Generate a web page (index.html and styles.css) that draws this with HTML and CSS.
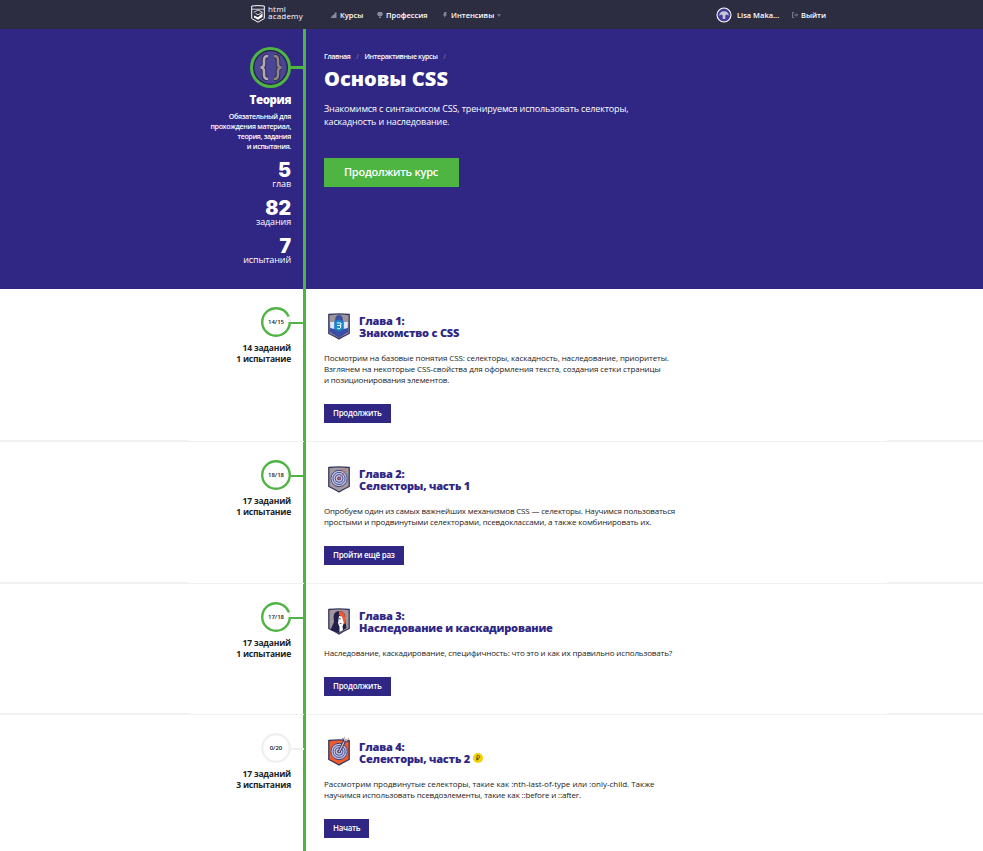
FILE: index.html
```html
<!DOCTYPE html>
<html lang="ru">
<head>
<meta charset="utf-8">
<title>Основы CSS</title>
<link rel="stylesheet" href="styles.css">
</head>
<body>
<svg width="0" height="0" class="defs" aria-hidden="true">
  <symbol id="shield" viewBox="0 0 22 27"><path d="M.8 1.5Q11 .3 21.2 1.5V20.5Q16 23 11 26Q6 23 .8 20.5Z" fill="currentColor" stroke="#34355f" stroke-width="1.3"/></symbol>
  <symbol id="target" viewBox="0 0 18 18"><circle cx="9" cy="9" r="8.4" fill="#c3c6e0" stroke="#3c4080" stroke-width="1"/><circle cx="9" cy="9" r="6.2" fill="none" stroke="#444a93" stroke-width="1"/><circle cx="9" cy="9" r="4" fill="none" stroke="#444a93" stroke-width="1"/><circle cx="9" cy="9" r="1.9" fill="#4a4478"/><circle cx="9" cy="9" r="1" fill="#e95030"/></symbol>
</svg>
<header class="top">
  <a class="logo">
    <svg class="logo-mark" viewBox="0 0 14 18" fill="none" stroke="#fff"><path d="M.7 1Q7 .2 13.3 1V13.5L7 17.2L.7 13.5Z" stroke-width="1"/><path d="M1 4.2H13M2.6 7.3L7 5L11.4 7.3L7 9.8L4.5 8.4" stroke-width=".8"/><path d="M3 10.5L7 12.2L11.5 8V12L7 14.8L3 12.6Z" fill="#fff" stroke="none"/></svg>
    <span class="logo-name">html<br>academy</span>
  </a>
  <nav class="menu">
    <a><svg class="ico" viewBox="0 0 6 6"><path d="M0 6V4.5H1.5V3H3V1.5H4V.5H5.5V6Z"/></svg><span>Курсы</span></a>
    <a class="prof"><svg class="ico" viewBox="0 0 6 6"><path d="M1.2 0H4.8L6 2L4.8 4H1.2L0 2ZM2 4.5H4V6H2Z"/></svg><span>Профессия</span></a>
    <a class="intens"><svg class="ico" viewBox="0 0 6 6"><path d="M2.5 0H4.7L3.7 2.3H5L2 6L2.6 3.4H1Z"/></svg><span>Интенсивы</span><i class="caret"></i></a>
  </nav>
  <div class="user">
    <svg class="avatar" viewBox="0 0 16 16"><circle cx="8" cy="8" r="7" fill="#433c96" stroke="#fff" stroke-width="1.1"/><path d="M3.2 8.8Q3.5 4.5 8 4.3Q12.5 4.5 12.8 8.8L10.8 7.4L9.3 8.4V12H6.7V8.4L5.2 7.4Z" fill="#c9c3d6"/></svg>
    <span class="name">Lisa Maka...</span>
    <svg class="exit" viewBox="0 0 6 6" fill="none" stroke="#8b8b98" stroke-width=".8"><path d="M2.3 .5H.5V5.5H2.3M2 3H5.5M4.2 1.6L5.6 3L4.2 4.4"/></svg>
    <span>Выйти</span>
  </div>
</header>
<main>
  <section class="row hero">
    <aside class="side">
      <div class="node"><svg class="badge" viewBox="0 0 41 41"><circle cx="20.5" cy="20.5" r="19" fill="#211f49" stroke="#4eb543" stroke-width="3"/><circle cx="20.5" cy="20.5" r="16.2" fill="#4b4596"/><g fill="none" stroke="#2c2751" stroke-width="4.4"><path d="M18 9Q14 9 14 13V17Q14 20.5 10.5 20.5Q14 20.5 14 24V28Q14 32 18 32M24 9Q28 9 28 13V17Q28 20.5 31.5 20.5Q28 20.5 28 24V28Q28 32 24 32"/></g><g fill="none" stroke-width="2.6"><path stroke="#b3aaaa" d="M18 9Q14 9 14 13V17Q14 20.5 10.5 20.5Q14 20.5 14 24V28Q14 32 18 32"/><path stroke="#8f8684" d="M24 9Q28 9 28 13V17Q28 20.5 31.5 20.5Q28 20.5 28 24V28Q28 32 24 32"/></g></svg><i class="link"></i></div>
      <h2>Теория</h2>
      <p class="note">Обязательный для<br>прохождения материал,<br>теория, задания<br>и испытания.</p>
      <dl><dt>5</dt><dd>глав</dd><dt>82</dt><dd>задания</dd><dt>7</dt><dd>испытаний</dd></dl>
    </aside>
    <i class="bar"></i>
    <div class="body">
      <div class="crumbs"><a>Главная</a><i>/</i><a>Интерактивные курсы</a><i>/</i></div>
      <h1>Основы CSS</h1>
      <p class="lead">Знакомимся с синтаксисом CSS, тренируемся использовать селекторы,<br>каскадность и наследование.</p>
      <a class="go">Продолжить курс</a>
    </div>
  </section>

  <section class="row chapter">
    <aside class="side">
      <div class="node"><svg class="ring" viewBox="0 0 30 30"><circle cx="15" cy="15" r="13.8" stroke="#f0f0f0"/><circle cx="15" cy="15" r="13.8" class="done" pathLength="15" stroke-dasharray="14 1"/></svg><b class="score">14/15</b><i class="link"></i></div>
      <p class="tasks">14 заданий<br>1 испытание</p>
    </aside>
    <i class="bar"></i>
    <div class="body">
      <div class="title"><svg class="shield" viewBox="0 0 22 27" color="#9e959b"><use href="#shield" width="22" height="27"/><path d="M7 8Q7 2 11 2Q15 2 15 8L20.3 13V19L11 25L1.7 19V13Z" fill="#3b4ea4"/><path d="M2.2 9H6.5V16L2.2 15ZM15.5 9H19.8V15L15.5 16Z" fill="#dfe8fa"/><path d="M6.5 8.5L11 6.5L15.5 8.5V16.5L11 18.5L6.5 16.5Z" fill="#1586cd"/><path d="M8.8 10H13L12.5 15L10.8 15.8L9 15M9 12.5H12.8" fill="none" stroke="#fff" stroke-width="1"/></svg><h3>Глава 1:<br>Знакомство с CSS</h3></div>
      <p class="text tight"><span class="loose">Посмотрим на базовые понятия CSS: селекторы, каскадность, наследование, приоритеты.<br>Взглянем на некоторые CSS-свойства для оформления текста, создания сетки страницы</span><br>и позиционирования элементов.</p>
      <a class="btn">Продолжить</a>
    </div>
  </section>

  <section class="row chapter">
    <aside class="side">
      <div class="node"><svg class="ring" viewBox="0 0 30 30"><circle cx="15" cy="15" r="13.8" class="done"/></svg><b class="score">18/18</b><i class="link"></i></div>
      <p class="tasks">17 заданий<br>1 испытание</p>
    </aside>
    <i class="bar"></i>
    <div class="body">
      <div class="title"><svg class="shield" viewBox="0 0 22 27" color="#a49a9d"><use href="#shield" width="22" height="27"/><use href="#target" x="2.3" y="3.7" width="17.5" height="17.5"/><path d="M11 12.5L16.5 6M14 4L18 3M15 5.5L18.5 5.5" stroke="#b96e69" stroke-width="1"/></svg><h3>Глава 2:<br>Селекторы, часть 1</h3></div>
      <p class="text"><span class="tight">Опробуем один из самых важнейших механизмов CSS — селекторы. Научимся пользоваться</span><br>простыми и продвинутыми селекторами, псевдоклассами, а также комбинировать их.</p>
      <a class="btn">Пройти ещё раз</a>
    </div>
  </section>

  <section class="row chapter">
    <aside class="side">
      <div class="node"><svg class="ring" viewBox="0 0 30 30"><circle cx="15" cy="15" r="13.8" stroke="#f0f0f0"/><circle cx="15" cy="15" r="13.8" class="done" pathLength="18" stroke-dasharray="17 1"/></svg><b class="score">17/18</b><i class="link"></i></div>
      <p class="tasks">17 заданий<br>1 испытание</p>
    </aside>
    <i class="bar"></i>
    <div class="body">
      <div class="title"><svg class="shield" viewBox="0 0 22 27" color="#a29699"><use href="#shield" width="22" height="27"/><path d="M2.5 22L6 14Q4 3 11 3Q18 3 17 11L18.5 20L11 25Z" fill="#20204a"/><path d="M11 3Q18 3 17 12L17.5 16L15 15L14 9L11 7Z" fill="#ee5730"/><path d="M11 8L14 8.5L15.8 15L14.5 18.5L15 22L11.5 24V19L10 15Z" fill="#fff"/><path d="M11 10.5L13 11M11.8 15.5H13.5" stroke="#303060" stroke-width=".8"/></svg><h3>Глава 3:<br>Наследование и каскадирование</h3></div>
      <p class="text">Наследование, каскадирование, специфичность: что это и как их правильно использовать?</p>
      <a class="btn">Продолжить</a>
    </div>
  </section>

  <section class="row chapter">
    <aside class="side">
      <div class="node empty"><svg class="ring" viewBox="0 0 30 30"><circle cx="15" cy="15" r="13.8" stroke="#f0f0f0"/></svg><b class="score">0/20</b><i class="link"></i></div>
      <p class="tasks">17 заданий<br>3 испытания</p>
    </aside>
    <i class="bar"></i>
    <div class="body">
      <div class="title"><svg class="shield" viewBox="0 0 22 27" color="#f15a2b"><use href="#shield" width="22" height="27"/><use href="#target" x="2.3" y="3.7" width="17.5" height="17.5"/><path d="M11 13L17 1" stroke="#30305f" stroke-width="2.8"/><path d="M11 13L17 1M16.3 1L17-2.5M17.5 2.5L21-1" stroke="#d5c3c8" stroke-width="1.3"/><path d="M14.8-1L16 3L20.5 2.5" fill="none" stroke="#4a3c63" stroke-width="1"/></svg><h3>Глава 4:<br>Селекторы, часть 2 <svg class="coin" viewBox="0 0 10 10"><circle cx="5" cy="5" r="5" fill="#f6d000"/><path d="M4.1 7.5V2.5H5.4Q6.8 2.6 6.8 3.9Q6.7 5.2 5.3 5.2H3.3M3.3 6.4H5.7" fill="none" stroke="#51480d" stroke-width=".8"/></svg></h3></div>
      <p class="text"><span class="wide">Рассмотрим продвинутые селекторы, такие как :nth-last-of-type или :only-child. Также</span><br>научимся использовать псевдоэлементы, такие как ::before и ::after.</p>
      <a class="btn start">Начать</a>
    </div>
  </section>
</main>
</body>
</html>
```

FILE: styles.css
```css
* { box-sizing: border-box; }
body { margin: 0; background: #fff; color: #222; font-family: "Open Sans", sans-serif; overflow: hidden; }
.defs { position: absolute; }
h1, h2, h3, p, dl, dd { margin: 0; }
i { font-style: normal; }
svg { display: block; flex: none; overflow: visible; }

.top { display: flex; align-items: center; height: 29px; padding-left: 251px; background: #2d2d42; color: #fff; }
.logo { display: flex; align-items: center; width: 80px; gap: 3px; padding-bottom: 1px; }
.logo-mark { width: 14px; height: 18px; }
.logo-name { font-size: 8px; line-height: 7.5px; letter-spacing: .2px; padding-bottom: 4px; }
.menu, .menu a, .user { display: flex; align-items: center; }
.menu { font-size: 7.5px; font-weight: 600; line-height: 10px; padding-top: 1px; }
.menu a { gap: 3px; width: 46px; }
.menu .prof { width: 65px; }
.menu .intens { width: 60px; }
.ico { width: 6px; height: 6px; fill: #8a8a98; }
.caret { border: 2px solid transparent; border-top: 3px solid #72727f; border-bottom: 0; }
.user { margin-left: auto; width: 267px; font-size: 7.5px; font-weight: 600; line-height: 10px; }
.avatar { width: 16px; height: 16px; margin-right: 5px; }
.name { width: 55px; }
.exit { width: 6px; height: 6px; margin-right: 3px; }

.row { display: grid; grid-template-columns: 303px 3px 1fr; }
.bar { background: #4eb543; }
.side { padding: 18px 12px 0 0; text-align: right; }
.body { padding-left: 18px; }
.node { display: flex; align-items: center; justify-content: flex-end; margin-right: -12px; position: relative; }
.link { width: 12px; height: 2px; margin-top: 2px; background: #4eb543; }

.hero { height: 260px; background: #302683; color: #fff; }
.badge { width: 41px; height: 41px; }
.hero .link { height: 3px; margin-top: 0; }
.hero h2 { font-size: 11.5px; line-height: 16px; font-weight: 800; letter-spacing: -.4px; margin-top: 4px; }
.note { font-size: 7px; line-height: 10px; font-weight: 600; letter-spacing: -.3px; margin-top: 4px; }
dl { margin-top: 8px; }
dt { font: 900 19.5px/20px Inter, sans-serif; }
dd { font-size: 9px; line-height: 10px; letter-spacing: -.12px; margin-bottom: 9px; margin-top: -1px; }
.crumbs { display: flex; font-size: 7px; line-height: 10px; font-weight: 600; letter-spacing: -.36px; padding-top: 23px; }
.crumbs i { width: 14px; text-align: center; color: #8580b5; font-weight: 400; }
h1 { font-size: 20px; line-height: 24px; font-weight: 800; margin-top: 5px; }
.lead { font-size: 9px; line-height: 13px; letter-spacing: -.135px; margin-top: 11px; }
.go { display: flex; align-items: center; justify-content: center; width: 135px; height: 29px; margin-top: 30px; padding: 0 1px 2px 0; background: #4eb543; font-size: 11px; font-weight: 600; letter-spacing: -.25px; }

.chapter { padding-bottom: 1px; background: linear-gradient(#f1f1f1, #f1f1f1) 0 100% / 100% 1px no-repeat, linear-gradient(#f1f1f1, #f1f1f1) 0 100% / 189px 2px no-repeat, linear-gradient(#f1f1f1, #f1f1f1) 100% 100% / 96px 2px no-repeat; }
.chapter .bar { margin-bottom: -1px; background: linear-gradient(#f1f1f1, #f1f1f1) 0 100% / 1px 1px no-repeat #4eb543; }
.chapter .body { padding-bottom: 18px; }
.ring { width: 30px; height: 30px; fill: none; stroke-width: 2.4; }
.done { stroke: #4eb543; }
.score { position: absolute; right: 12px; width: 30px; text-align: center; font-size: 6px; line-height: 10px; font-weight: 600; }
.empty .link { width: 13px; margin-right: -1px; background: #f0f0f0; z-index: 1; }
.tasks { font-size: 8.5px; line-height: 11px; font-weight: 700; letter-spacing: -.2px; margin-top: 5px; }
.title { display: flex; gap: 9px; padding: 26px 0 0 4px; height: 50px; }
.shield { width: 22px; height: 27px; margin-top: -2px; }
h3 { color: #302683; font-size: 11px; line-height: 12px; font-weight: 800; letter-spacing: -.2px; white-space: nowrap; }
.coin { display: inline-block; width: 10px; height: 10px; vertical-align: 0; }
.text { font-size: 8px; line-height: 11px; letter-spacing: -.145px; margin-top: 13px; white-space: nowrap; }
.text .loose { letter-spacing: -.1px; }
.tight { letter-spacing: -.17px; }
.text .wide { letter-spacing: -.015px; }
.btn { display: flex; width: fit-content; align-items: center; height: 19px; margin-top: 19px; padding: 0 9px 2px; background: #302683; color: #fff; font-size: 8px; font-weight: 600; letter-spacing: -.26px; white-space: nowrap; }
.start { width: 45px; letter-spacing: -.35px; }
```
